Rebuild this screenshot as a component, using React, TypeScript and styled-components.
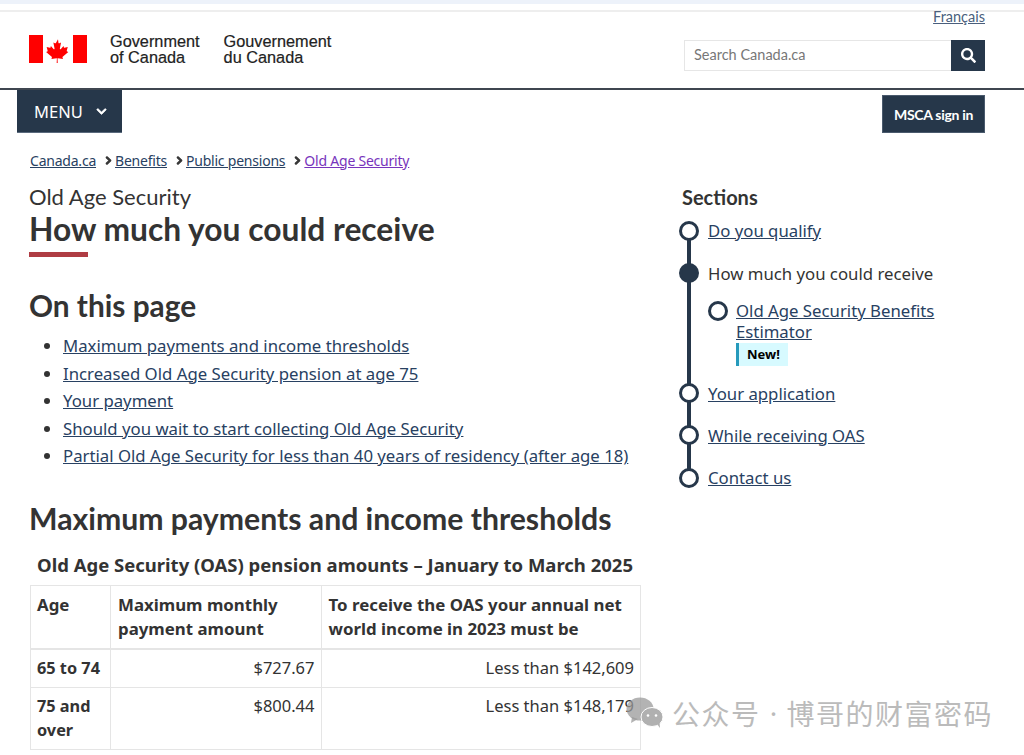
import React from "react";
import styled, { createGlobalStyle } from "styled-components";
import { FaChevronDown, FaChevronRight, FaSearch } from "react-icons/fa";

const GlobalStyle = createGlobalStyle`
  html, body {
    margin: 0;
    padding: 0;
    background: #fff;
    color: #333;
    font-family: "Noto Sans", sans-serif;
    overflow: hidden;
  }
  a {
    color: #284162;
  }
`;

const crumbs = ["Canada.ca", "Benefits", "Public pensions"];
const tocLinks = [
  "Maximum payments and income thresholds",
  "Increased Old Age Security pension at age 75",
  "Your payment",
  "Should you wait to start collecting Old Age Security",
  "Partial Old Age Security for less than 40 years of residency (after age 18)",
];

const App: React.FC = () => {
  return (
    <Page>
      <GlobalStyle />
      <TopStrip />
      <Header>
        <Brand>
          <svg width="58" height="28" viewBox="0 0 58 28">
            <rect x="0" y="0" width="14" height="28" fill="#f00" />
            <rect x="44" y="0" width="14" height="28" fill="#f00" />
            <path
              fill="#f00"
              d="M29 2.5l-2.6 4.8c-.3.5-.8.5-1.3.2l-1.9-1 1.4 7.4c.3 1.3-.7 1.3-1.2.8l-3.3-3.7-.5 1.9c-.1.3-.3.5-.7.4l-4.100-.9 1.100 4c.2.9.4 1.200-.3 1.500l-1.500.7 7 5.700c.3.200.4.600.300.900l-.6 2 6.300-.8c.3 0 .5.100.5.400l-.3 6.500h1.400l-.3-6.500c0-.3.2-.4.500-.4l6.300.8-.6-2c-.1-.3 0-.7.300-.9l7-5.700-1.500-.7c-.7-.3-.5-.6-.3-1.500l1.100-4-4.100.9c-.4.100-.6-.1-.7-.4l-.5-1.900-3.300 3.700c-.5.500-1.500.5-1.200-.8l1.400-7.400-1.900 1c-.5.300-1 .3-1.300-.2z"
              transform="translate(5.8 2.2) scale(.8)"
            />
          </svg>
          <Signature>
            <span>Government</span>
            <span>of Canada</span>
          </Signature>
          <Signature>
            <span>Gouvernement</span>
            <span>du Canada</span>
          </Signature>
        </Brand>
        <HeaderRight>
          <LangLink href="#">Français</LangLink>
          <SearchBox>
            <SearchInput>Search Canada.ca</SearchInput>
            <SearchButton>
              <FaSearch size={15} />
            </SearchButton>
          </SearchBox>
        </HeaderRight>
      </Header>
      <NavBar>
        <MenuButton>
          MENU
          <FaChevronDown size={11} />
        </MenuButton>
        <SignIn>MSCA sign in</SignIn>
      </NavBar>
      <Breadcrumbs>
        {crumbs.map((c) => (
          <React.Fragment key={c}>
            <a href="#">{c}</a>
            <Chevron>
              <FaChevronRight size={9} />
            </Chevron>
          </React.Fragment>
        ))}
        <VisitedLink href="#">Old Age Security</VisitedLink>
      </Breadcrumbs>
      <Columns>
        <Main>
          <Eyebrow>Old Age Security</Eyebrow>
          <Title>How much you could receive</Title>
          <TitleRule />
          <SectionHeading>On this page</SectionHeading>
          <TocList>
            {tocLinks.map((t) => (
              <li key={t}>
                <a href="#">{t}</a>
              </li>
            ))}
          </TocList>
          <TableHeading>Maximum payments and income thresholds</TableHeading>
          <AmountsTable>
            <caption>Old Age Security (OAS) pension amounts – January to March 2025</caption>
            <colgroup>
              <col style={{ width: 80 }} />
              <col style={{ width: 210.5 }} />
              <col style={{ width: 319.5 }} />
            </colgroup>
            <thead>
              <tr>
                <th>Age</th>
                <th>Maximum monthly payment amount</th>
                <th>To receive the OAS your annual net world income in 2023 must be</th>
              </tr>
            </thead>
            <tbody>
              <tr>
                <th>65 to 74</th>
                <td>$727.67</td>
                <td>Less than $142,609</td>
              </tr>
              <tr>
                <th>75 and over</th>
                <td>$800.44</td>
                <td>Less than $148,179</td>
              </tr>
            </tbody>
          </AmountsTable>
        </Main>
        <Aside>
          <AsideTitle>Sections</AsideTitle>
          <Steps>
            <Step>
              <Dot />
              <a href="#">Do you qualify</a>
            </Step>
            <Step>
              <Dot $filled />
              <span>How much you could receive</span>
            </Step>
            <SubStep>
              <Dot />
              <div>
                <a href="#">Old Age Security Benefits Estimator</a>
                <NewTag>New!</NewTag>
              </div>
            </SubStep>
            <Step>
              <Dot />
              <a href="#">Your application</a>
            </Step>
            <Step>
              <Dot />
              <a href="#">While receiving OAS</a>
            </Step>
            <Step>
              <Dot />
              <a href="#">Contact us</a>
            </Step>
          </Steps>
        </Aside>
      </Columns>
      <Watermark>
        <svg width="38" height="32" viewBox="0 0 38 32">
          <ellipse cx="14" cy="12" rx="13.500" ry="11.500" fill="#9a9a9a" fillOpacity=".75" />
          <path d="M6 20l-1 6 7-4z" fill="#9a9a9a" fillOpacity=".75" />
          <ellipse cx="26" cy="20" rx="11" ry="9.500" fill="#b0b0b0" stroke="#fff" strokeWidth="1" />
          <path d="M31 27l3 4-.5-6z" fill="#b0b0b0" />
          <circle cx="22" cy="18.500" r="1.300" fill="#fff" />
          <circle cx="30" cy="18.500" r="1.300" fill="#fff" />
        </svg>
        <span>公众号</span>
        <WatermarkDot>·</WatermarkDot>
        <span>博哥的财富密码</span>
      </Watermark>
    </Page>
  );
};

export default App;

const Page = styled.div`
  position: relative;
  width: 1024px;
  height: 755px;
  overflow: hidden;
`;

const TopStrip = styled.div`
  height: 4px;
  margin-bottom: 6px;
  background: #edf2fa;
`;

const Header = styled.header`
  height: 76px;
  display: flex;
  justify-content: space-between;
  padding: 0 39px 0 29px;
  border-top: 2px solid #eee;
  border-bottom: 2px solid #3f4650;
`;

const Brand = styled.div`
  display: flex;
  align-items: flex-start;
  padding-top: 23px;
  svg {
    flex: none;
  }
`;

const Signature = styled.div`
  display: flex;
  flex-direction: column;
  margin-left: 23px;
  margin-top: -2px;
  font-family: "Liberation Sans", Arial, sans-serif;
  font-size: 16.300px;
  line-height: 16px;
  color: #222;
  -webkit-text-stroke: 0.2px #222;
  &:last-child {
    margin-left: 24px;
  }
`;

const HeaderRight = styled.div`
  display: flex;
  flex-direction: column;
  align-items: flex-end;
`;

const LangLink = styled.a`
  font-family: Lato, sans-serif;
  font-size: 14.500px;
  line-height: 16px;
  height: 31px;
  margin-top: -3px;
  color: #4a5f7d;
`;

const SearchBox = styled.div`
  display: flex;
  width: 301px;
  height: 31px;
`;

const SearchInput = styled.div`
  flex: 1;
  box-sizing: border-box;
  padding-left: 9px;
  border: 1px solid #e6e6e6;
  border-right: 0;
  font-family: Lato, sans-serif;
  font-size: 14.500px;
  line-height: 28px;
  color: #777;
`;

const SearchButton = styled.div`
  width: 34px;
  display: flex;
  align-items: center;
  justify-content: center;
  background: #26374a;
  color: #fff;
`;

const NavBar = styled.nav`
  display: flex;
  justify-content: space-between;
  align-items: flex-start;
  padding: 0 39px 0 17px;
`;

const MenuButton = styled.div`
  width: 105px;
  height: 43px;
  box-sizing: border-box;
  display: flex;
  align-items: center;
  gap: 13px;
  padding-left: 17px;
  background: #26374a;
  border-bottom: 1px solid #5a6a7d;
  color: #fff;
  font-family: "Noto Sans", sans-serif;
  font-size: 16.500px;
  svg {
    stroke: currentColor;
    stroke-width: 30px;
  }
`;

const SignIn = styled.div`
  width: 103px;
  height: 38px;
  margin-top: 5px;
  box-sizing: border-box;
  display: flex;
  align-items: center;
  justify-content: center;
  background: #26374a;
  border: 1px solid #4a5a6d;
  color: #fff;
  font-family: Lato, sans-serif;
  font-size: 14px;
  font-weight: 700;
  letter-spacing: -0.3px;
`;

const Breadcrumbs = styled.div`
  display: flex;
  align-items: center;
  padding: 17px 0 0 30px;
  height: 20px;
  font-size: 14px;
  letter-spacing: -0.22px;
`;

const Chevron = styled.span`
  display: flex;
  margin: 0 2px 0 8px;
  color: #333;
  svg {
    stroke: currentColor;
    stroke-width: 60px;
  }
`;

const VisitedLink = styled.a`
  color: #7834bc;
`;

const Columns = styled.div`
  display: flex;
  padding: 13px 0 0 29px;
`;

const Main = styled.main`
  width: 612px;
  flex: none;
`;

const Eyebrow = styled.div`
  font-family: Lato, sans-serif;
  font-size: 22px;
  line-height: 26px;
  margin-top: 1px;
`;

const Title = styled.h1`
  margin: 0;
  font-family: Lato, sans-serif;
  font-size: 31.750px;
  font-weight: 700;
  line-height: 38px;
`;

const TitleRule = styled.div`
  width: 59px;
  height: 5px;
  margin-top: 4px;
  background: #af3c43;
`;

const SectionHeading = styled.h2`
  margin: 31px 0 0;
  font-family: Lato, sans-serif;
  font-size: 29.800px;
  font-weight: 700;
  line-height: 36px;
`;

const TocList = styled.ul`
  margin: 8px 0 0;
  padding: 0 0 0 34px;
  font-size: 16.760px;
  line-height: 27.600px;
`;

const TableHeading = styled(SectionHeading)`
  margin-top: 30px;
  font-size: 30.200px;
`;

const AmountsTable = styled.table`
  width: 610px;
  margin-top: 16px;
  margin-left: 1px;
  table-layout: fixed;
  border-collapse: collapse;
  font-size: 16.500px;
  line-height: 24px;
  caption {
    padding-bottom: 7px;
    text-align: left;
    padding-left: 7px;
    font-size: 18.500px;
    font-weight: 700;
    white-space: nowrap;
    line-height: 26px;
  }
  th,
  td {
    padding: 6px 6px 7px 7px;
    border: 1px solid #e5e5e5;
    vertical-align: top;
  }
  th {
    text-align: left;
    font-weight: 700;
    font-size: 16.300px;
  }
  th:first-child {
    padding-left: 6px;
  }
  td {
    text-align: right;
  }
  thead th {
    padding-top: 7px;
    padding-bottom: 7px;
    border-bottom-width: 2px;
    font-size: 16.850px;
  }
`;

const Aside = styled.aside`
  margin-left: 41px;
  width: 300px;
`;

const AsideTitle = styled.div`
  font-family: Lato, sans-serif;
  font-size: 20px;
  font-weight: 700;
  line-height: 26px;
  margin-top: 1px;
`;

const Steps = styled.div`
  position: relative;
  margin-top: 10px;
  display: flex;
  flex-direction: column;
  font-size: 16.750px;
  line-height: 21px;
  &::before {
    content: "";
    position: absolute;
    left: 5px;
    top: 10px;
    bottom: 10px;
    width: 4px;
    background: #26374a;
  }
`;

const Step = styled.div`
  position: relative;
  display: flex;
  align-items: center;
  gap: 9px;
  height: 42px;
  margin-left: -3px;
  &:first-child,
  &:last-child {
    height: 21px;
  }
  &:first-child {
    margin-bottom: 11px;
  }
  &:last-child {
    margin-top: 11px;
  }
`;

const SubStep = styled.div`
  position: relative;
  display: flex;
  gap: 8px;
  margin: 7px 0 5px 26px;
  height: 66px;
  line-height: 20.500px;
`;

const Dot = styled.span<{ $filled?: boolean }>`
  flex: none;
  width: 20px;
  height: 20px;
  box-sizing: border-box;
  border: 3px solid #26374a;
  border-radius: 50%;
  background: ${(p) => (p.$filled ? "#26374a" : "#fff")};
`;

const NewTag = styled.div`
  width: fit-content;
  height: 23px;
  box-sizing: border-box;
  margin-top: 1px;
  padding: 0 8px;
  border-left: 3px solid #269abc;
  background: #d7faff;
  color: #000;
  font-size: 13px;
  font-weight: 700;
  line-height: 22px;
`;

const Watermark = styled.div`
  position: absolute;
  left: 626px;
  top: 696px;
  display: flex;
  align-items: center;
  gap: 8px;
  color: #bbb;
  font-family: "Noto Sans CJK SC", sans-serif;
  font-size: 28px;
  letter-spacing: 1.500px;
  line-height: 34px;
  white-space: nowrap;
`;

const WatermarkDot = styled.span`
  width: 10px;
  font-family: "Noto Sans", sans-serif;
  letter-spacing: 0;
  text-align: center;
`;
